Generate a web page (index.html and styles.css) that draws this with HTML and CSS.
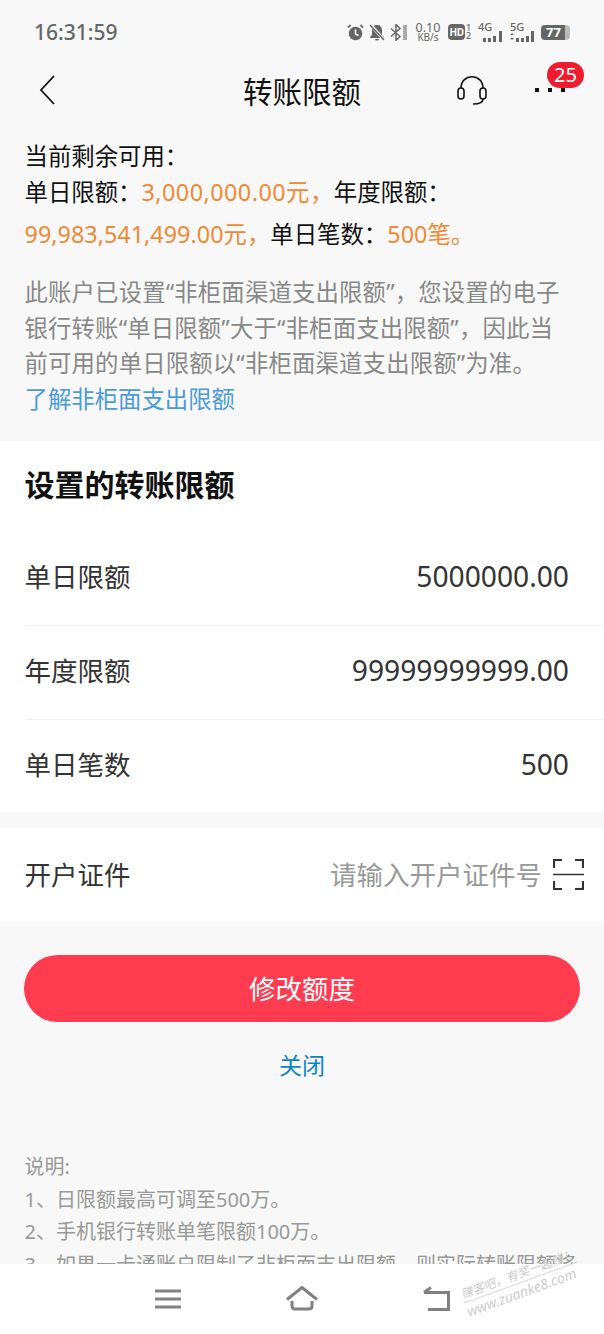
FILE: index.html
```html
<!DOCTYPE html>
<html lang="zh-CN">

<head>
    <meta charset="UTF-8">
    <meta name="viewport" content="width=device-width, initial-scale=1.0">
    <title>转账限额</title>
    <link rel="stylesheet" href="styles.css">
</head>

<body>
    <div id="screen">
        <div id="status">
            <span class="time">16:31:59</span>
            <div class="status-icons">
                <svg class="ic-alarm" width="17" height="17" viewBox="0 0 17 17"><circle cx="8.500" cy="9.500" r="6.800" fill="#666"/><path d="M8.500 5.500v4.500l3 1.500" stroke="#fff" stroke-width="1.500" fill="none"/><path d="M1 3.500L3.500 1M16 3.500L13.500 1" stroke="#666" stroke-width="1.800"/></svg>
                <svg class="ic-bell" width="16" height="17" viewBox="0 0 16 17"><path d="M8 1C5 1 3 3 3 6v5l-2 2v1h14v-1l-2-2V6c0-3-2-5-5-5zM6 15h4c0 2-4 2-4 0z" fill="#666"/><path d="M1 0l14 16" stroke="#f8f8f8" stroke-width="3"/><path d="M1 1l14 15" stroke="#666" stroke-width="1.500"/></svg>
                <svg class="ic-bt" width="18" height="17" viewBox="0 0 18 17"><path d="M1 4.500l9 8-4 4V.5l4 4-9 8" stroke="#666" stroke-width="1.500" fill="none"/><rect x="13" y="1" width="4" height="15" fill="#aaa"/></svg>
                <div class="speed"><span>0.10</span><span>KB/s</span></div>
                <span class="hd">HD</span>
                <div class="sim"><span>1</span><span>2</span></div>
                <div class="signal sig-4g">
                    <span class="net">4G</span>
                    <svg width="20" height="12" viewBox="0 0 20 12"><path d="M0 8h3v4H0zM5 8h3v4H5zM10 6h3v6h-3zM16 1h3v11h-3z" fill="#666"/></svg>
                </div>
                <div class="signal sig-5g">
                    <span class="net">5G</span>
                    <svg width="25" height="12" viewBox="0 0 25 12"><path d="M0 5l2-2 2 2zM0 8l2 2 2-2z" fill="#666"/><path d="M6 8h3v4H6zM11 8h3v4h-3zM16 6h3v6h-3zM21 1h3v11h-3z" fill="#666"/></svg>
                </div>
                <div class="battery"><span>77</span></div>
            </div>
        </div>

        <div id="nav">
            <svg class="back" width="16" height="30" viewBox="0 0 16 30"><path d="M15 1L2 15l13 14" stroke="#111" stroke-width="1.800" fill="none"/></svg>
            <h1>转账限额</h1>
            <svg class="headset" width="32" height="32" viewBox="0 0 32 32"><path d="M5 14C5 -1 27 -1 27 14" stroke="#111" stroke-width="1.600" fill="none"/><rect x="2" y="14" width="6" height="11" rx="3" stroke="#111" stroke-width="1.600" fill="none"/><rect x="24" y="14" width="6" height="11" rx="3" stroke="#111" stroke-width="1.600" fill="none"/><path d="M27 25c0 4-5 5-10 5" stroke="#111" stroke-width="1.600" fill="none"/></svg>
            <div class="more"><i></i><i></i><i></i></div>
            <span class="badge">25</span>
        </div>

        <div id="main">
            <div id="summary">
                <p class="line">当前剩余可用：</p>
                <p class="line">单日限额：<span class="orange wide">3,000,000.00元，</span>年度限额：</p>
                <p class="line third"><span class="orange">99,983,541,499.00元，</span>单日笔数：<span class="orange">500笔。</span></p>
                <p class="note">此账户已设置“非柜面渠道支出限额”，您设置的电子银行转账“单日限额”大于“非柜面支出限额”，因此当前可用的单日限额以“非柜面渠道支出限额”为准。</p>
                <p class="link">了解非柜面支出限额</p>
            </div>

            <div class="card">
                <h2>设置的转账限额</h2>
                <div class="row"><span>单日限额</span><span class="value">5000000.00</span></div>
                <div class="row"><span>年度限额</span><span class="value">99999999999.00</span></div>
                <div class="row"><span>单日笔数</span><span class="value">500</span></div>
            </div>

            <div class="card id-card">
                <div class="row">
                    <span>开户证件</span>
                    <div class="id-input">
                        <span class="placeholder">请输入开户证件号</span>
                        <svg width="31" height="31" viewBox="0 0 31 31"><path d="M1 9V1h8M22 1h8v8M1 22v8h8M22 30h8v-8" stroke="#333" stroke-width="2.200" fill="none"/><path d="M0 15.500h31" stroke="#333" stroke-width="1.500"/></svg>
                    </div>
                </div>
            </div>

            <button id="submit" type="button">修改额度</button>
            <p id="close">关闭</p>

            <div id="desc">
                <p>说明:</p>
                <p>1、日限额最高可调至500万。</p>
                <p>2、手机银行转账单笔限额100万。</p>
                <p>3、如果一卡通账户限制了非柜面支出限额，则实际转账限额将</p>
            </div>
        </div>

        <div id="bottom">
            <svg class="nav-menu" width="26" height="20" viewBox="0 0 26 20"><path d="M0 2h26M0 10h26M0 18h26" stroke="#808080" stroke-width="3"/></svg>
            <svg class="nav-home" width="32" height="25" viewBox="0 0 32 25"><path d="M1 13.500L16 1.500l15 12" stroke="#808080" stroke-width="3" fill="none"/><path d="M6 15v4.500c0 2 1 3.500 3 3.500h14c2 0 3-1.500 3-3.500V15" stroke="#808080" stroke-width="3" fill="none"/></svg>
            <svg class="nav-back" width="27" height="25" viewBox="0 0 27 25"><path d="M1 6.500h24.500v17H5" stroke="#808080" stroke-width="3" fill="none"/><path d="M1 6.500L8 1.500" stroke="#808080" stroke-width="3" fill="none"/></svg>
        </div>

        <div class="watermark">
            <p>赚客吧，有奖一起赚！</p>
            <p>www.zuanke8.com</p>
        </div>
    </div>
</body>

</html>
```

FILE: styles.css
```css
* {
    padding: 0;
    margin: 0;
    box-sizing: border-box;
    font-family: 'Noto Sans', 'Noto Sans CJK SC', sans-serif;
}

body {
    background-color: #f8f8f8;
}

#screen {
    position: relative;
    display: flex;
    flex-direction: column;
    width: 604px;
    height: 1334px;
    overflow: hidden;
}

/* status bar */
#status {
    display: flex;
    justify-content: space-between;
    align-items: center;
    height: 64px;
    padding: 0 34px;
    flex-shrink: 0;
}

.time {
    font-size: 21px;
    font-weight: 500;
    color: #666666;
}

.status-icons {
    display: flex;
    align-items: center;
    color: #666666;
}

.ic-bell {
    margin-left: 5px;
}

.ic-bt {
    margin-left: 5px;
}

.speed {
    display: flex;
    flex-direction: column;
    align-items: center;
    width: 26px;
    margin-left: 7px;
    font-size: 10px;
    line-height: 9px;
    white-space: nowrap;
}

.speed span:first-child {
    font-size: 12.500px;
    line-height: 10px;
}

.hd {
    width: 17px;
    height: 16px;
    margin-left: 7px;
    background-color: #666666;
    color: #ffffff;
    border-radius: 4px;
    font-size: 10px;
    line-height: 16px;
    font-weight: 700;
    text-align: center;
    letter-spacing: -0.5px;
}

.sim {
    display: flex;
    flex-direction: column;
    width: 7px;
    margin-left: 1px;
    font-size: 9px;
    line-height: 8px;
    font-weight: 500;
}

.signal {
    position: relative;
    width: 25px;
    height: 20px;
}

.sig-4g {
    margin-left: 5px;
}

.sig-5g {
    margin-left: 7px;
}

.signal svg {
    position: absolute;
    right: 0;
    bottom: 0;
}

.net {
    position: absolute;
    left: 0;
    top: -3px;
    font-size: 11px;
    font-weight: 500;
}

.battery {
    width: 29px;
    height: 15px;
    margin-left: 6px;
    border-radius: 4px;
    background: linear-gradient(to right, #666666 24px, #bbbbbb 24px);
    color: #ffffff;
    font-size: 13px;
    line-height: 15px;
    font-weight: 700;
    padding-left: 5px;
}

/* nav */
#nav {
    position: relative;
    display: flex;
    justify-content: center;
    align-items: center;
    height: 52px;
    flex-shrink: 0;
}

h1 {
    font-size: 29.500px;
    font-weight: 400;
    color: #111111;
}

.back {
    position: absolute;
    left: 39px;
    top: 11px;
}

.headset {
    position: absolute;
    left: 456px;
    top: 10px;
}

.more {
    position: absolute;
    left: 535px;
    top: 24px;
    display: flex;
    gap: 9px;
}

.more i {
    width: 4px;
    height: 4px;
    background-color: #111111;
}

.badge {
    position: absolute;
    left: 547px;
    top: -2px;
    width: 37px;
    height: 26px;
    border-radius: 13px;
    background-color: #ee1c2e;
    color: #ffffff;
    font-size: 20px;
    line-height: 26px;
    text-align: center;
}

#main {
    flex: 1;
    overflow: hidden;
}

/* summary */
#summary {
    padding: 22px 0 0 24.500px;
    height: 325px;
    font-size: 23.400px;
}

.line {
    line-height: 36px;
    color: #111111;
}

.third {
    margin-top: 6px;
}

.orange {
    color: #ee8a34;
}

.wide {
    letter-spacing: 0.450px;
}

.note {
    width: 545px;
    margin-top: 23px;
    line-height: 35.500px;
    letter-spacing: 0.150px;
    color: #888888;
}

.link {
    line-height: 35.500px;
    color: #4a9bd8;
}

/* cards */
.card {
    background-color: #ffffff;
    padding-left: 24.500px;
}

h2 {
    height: 90px;
    font-size: 30px;
    font-weight: 700;
    line-height: 88px;
    color: #111111;
}

.row {
    display: flex;
    justify-content: space-between;
    align-items: center;
    height: 94px;
    padding-right: 35px;
    font-size: 26.500px;
    color: #333333;
    border-bottom: 1px solid #efefef;
}

.row > span {
    padding-bottom: 6px;
}

.row:last-child {
    height: 92px;
    border-bottom: none;
}

.card .row:nth-child(2) {
    height: 95px;
}

.value {
    font-size: 28.200px;
}

.row .value {
    padding-bottom: 5px;
}

.id-card {
    margin-top: 16px;
}

.id-card .row {
    height: 93px;
    padding-right: 20px;
}

.id-card .row > span {
    padding-bottom: 2px;
}

.id-input {
    display: flex;
    align-items: center;
    gap: 11px;
}

.placeholder {
    padding-bottom: 2px;
    font-size: 26.500px;
    color: #999999;
}

/* actions */
#submit {
    display: block;
    width: 556px;
    height: 67px;
    margin: 34px 0 0 24px;
    padding-bottom: 2px;
    border: none;
    border-radius: 34px;
    background-color: #ff3b50;
    color: #ffffff;
    font-size: 26.500px;
}

#close {
    margin-top: 25px;
    text-align: center;
    font-size: 23px;
    line-height: 36px;
    color: #0a84c6;
}

#desc {
    margin-top: 68px;
    padding-left: 24.500px;
    font-size: 20px;
    line-height: 32.500px;
    color: #999999;
    white-space: nowrap;
}

/* bottom bar */
#bottom {
    display: flex;
    justify-content: center;
    align-items: center;
    height: 70px;
    flex-shrink: 0;
    padding-bottom: 1px;
    background-color: #ffffff;
}

.nav-home {
    margin-left: 105px;
}

.nav-back {
    margin-left: 105px;
}

.watermark {
    position: absolute;
    left: 461px;
    top: 1266px;
    transform: rotate(-20deg);
    font-size: 12px;
    line-height: 16px;
    font-style: italic;
    color: #cccccc;
    white-space: nowrap;
}

.watermark p:last-child {
    font-size: 14px;
    line-height: 18px;
    border-top: 1px solid #d8d8d8;
}
```
